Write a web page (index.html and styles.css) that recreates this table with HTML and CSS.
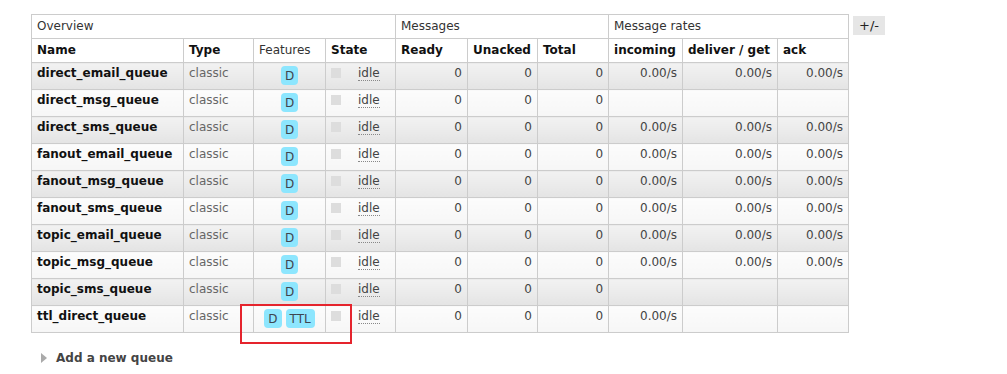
FILE: index.html
```html
<!DOCTYPE html>
<html>
<head>
<meta charset="utf-8">
<link rel="stylesheet" href="styles.css">
</head>
<body>
<div class="page">
  <table class="list">
    <colgroup>
      <col class="c-name"><col class="c-type"><col class="c-feat"><col class="c-state">
      <col class="c-ready"><col class="c-unacked"><col class="c-total">
      <col class="c-in"><col class="c-del"><col class="c-ack"><col class="c-pm">
    </colgroup>
    <thead>
      <tr class="group">
        <th colspan="4">Overview</th>
        <th colspan="3">Messages</th>
        <th colspan="3">Message rates</th>
        <th class="plus-minus"><span class="pm">+/-</span></th>
      </tr>
      <tr class="cols">
        <th>Name</th>
        <th>Type</th>
        <th class="light">Features</th>
        <th>State</th>
        <th>Ready</th>
        <th>Unacked</th>
        <th>Total</th>
        <th>incoming</th>
        <th>deliver / get</th>
        <th>ack</th>
        <th class="plus-minus"></th>
      </tr>
    </thead>
    <tbody>
      <tr class="alt1">
        <td class="name">direct_email_queue</td><td class="type">classic</td>
        <td class="feat"><span class="badge">D</span></td>
        <td class="state"><span class="sq"></span><abbr>idle</abbr></td>
        <td class="num">0</td><td class="num">0</td><td class="num">0</td>
        <td class="num">0.00/s</td><td class="num">0.00/s</td><td class="num">0.00/s</td>
        <td class="blank"></td>
      </tr>
      <tr class="alt2">
        <td class="name">direct_msg_queue</td><td class="type">classic</td>
        <td class="feat"><span class="badge">D</span></td>
        <td class="state"><span class="sq"></span><abbr>idle</abbr></td>
        <td class="num">0</td><td class="num">0</td><td class="num">0</td>
        <td class="num"></td><td class="num"></td><td class="num"></td>
        <td class="blank"></td>
      </tr>
      <tr class="alt1">
        <td class="name">direct_sms_queue</td><td class="type">classic</td>
        <td class="feat"><span class="badge">D</span></td>
        <td class="state"><span class="sq"></span><abbr>idle</abbr></td>
        <td class="num">0</td><td class="num">0</td><td class="num">0</td>
        <td class="num">0.00/s</td><td class="num">0.00/s</td><td class="num">0.00/s</td>
        <td class="blank"></td>
      </tr>
      <tr class="alt2">
        <td class="name">fanout_email_queue</td><td class="type">classic</td>
        <td class="feat"><span class="badge">D</span></td>
        <td class="state"><span class="sq"></span><abbr>idle</abbr></td>
        <td class="num">0</td><td class="num">0</td><td class="num">0</td>
        <td class="num">0.00/s</td><td class="num">0.00/s</td><td class="num">0.00/s</td>
        <td class="blank"></td>
      </tr>
      <tr class="alt1">
        <td class="name">fanout_msg_queue</td><td class="type">classic</td>
        <td class="feat"><span class="badge">D</span></td>
        <td class="state"><span class="sq"></span><abbr>idle</abbr></td>
        <td class="num">0</td><td class="num">0</td><td class="num">0</td>
        <td class="num">0.00/s</td><td class="num">0.00/s</td><td class="num">0.00/s</td>
        <td class="blank"></td>
      </tr>
      <tr class="alt2">
        <td class="name">fanout_sms_queue</td><td class="type">classic</td>
        <td class="feat"><span class="badge">D</span></td>
        <td class="state"><span class="sq"></span><abbr>idle</abbr></td>
        <td class="num">0</td><td class="num">0</td><td class="num">0</td>
        <td class="num">0.00/s</td><td class="num">0.00/s</td><td class="num">0.00/s</td>
        <td class="blank"></td>
      </tr>
      <tr class="alt1">
        <td class="name">topic_email_queue</td><td class="type">classic</td>
        <td class="feat"><span class="badge">D</span></td>
        <td class="state"><span class="sq"></span><abbr>idle</abbr></td>
        <td class="num">0</td><td class="num">0</td><td class="num">0</td>
        <td class="num">0.00/s</td><td class="num">0.00/s</td><td class="num">0.00/s</td>
        <td class="blank"></td>
      </tr>
      <tr class="alt2">
        <td class="name">topic_msg_queue</td><td class="type">classic</td>
        <td class="feat"><span class="badge">D</span></td>
        <td class="state"><span class="sq"></span><abbr>idle</abbr></td>
        <td class="num">0</td><td class="num">0</td><td class="num">0</td>
        <td class="num">0.00/s</td><td class="num">0.00/s</td><td class="num">0.00/s</td>
        <td class="blank"></td>
      </tr>
      <tr class="alt1">
        <td class="name">topic_sms_queue</td><td class="type">classic</td>
        <td class="feat"><span class="badge">D</span></td>
        <td class="state"><span class="sq"></span><abbr>idle</abbr></td>
        <td class="num">0</td><td class="num">0</td><td class="num">0</td>
        <td class="num"></td><td class="num"></td><td class="num"></td>
        <td class="blank"></td>
      </tr>
      <tr class="alt2">
        <td class="name">ttl_direct_queue</td><td class="type">classic</td>
        <td class="feat"><span class="badge">D</span><span class="badge">TTL</span><span class="highlight"></span></td>
        <td class="state"><span class="sq"></span><abbr>idle</abbr></td>
        <td class="num">0</td><td class="num">0</td><td class="num">0</td>
        <td class="num">0.00/s</td><td class="num"></td><td class="num"></td>
        <td class="blank"></td>
      </tr>
    </tbody>
  </table>
  <div class="add">
    <span class="tri"></span><span class="add-label">Add a new queue</span>
  </div>
</div>
</body>
</html>
```
FILE: styles.css
```css
html, body {
  margin: 0;
  padding: 0;
  background: #fff;
}
body {
  font-family: "DejaVu Sans", Verdana, sans-serif;
  font-size: 12px;
  color: #444;
}
.page {
  padding: 14px 0 0 31px;
}
table.list {
  border-collapse: collapse;
  table-layout: fixed;
  width: 857px;
}
col.c-name { width: 152px; }
col.c-type { width: 70px; }
col.c-feat { width: 72px; }
col.c-state { width: 70px; }
col.c-ready { width: 72px; }
col.c-unacked { width: 70px; }
col.c-total { width: 71px; }
col.c-in { width: 74px; }
col.c-del { width: 95px; }
col.c-ack { width: 71px; }
col.c-pm { width: 40px; }
table.list th,
table.list td {
  border: 1px solid #ccc;
  text-align: left;
  vertical-align: top;
  padding: 0 5px;
  overflow: visible;
  white-space: nowrap;
}
tr.group th {
  font-weight: normal;
  color: #333;
  height: 23px;
  line-height: 23px;
  background: #fff;
}
tr.cols th {
  font-weight: bold;
  color: #111;
  height: 23px;
  line-height: 23px;
  background: #fff;
}
tr.cols th.light {
  font-weight: normal;
  color: #333;
}
table.list th.plus-minus,
table.list td.blank {
  border: none;
  border-left: 1px solid #ccc;
  padding: 0 0 0 4px;
  background: #fff;
}
.pm {
  display: inline-block;
  background: #e6e6e6;
  color: #222;
  padding: 0 6px;
  height: 19px;
  line-height: 19px;
  margin-top: 1px;
  font-size: 13px;
}
tbody td {
  height: 26px;
  line-height: 20px;
}
tr.alt1 td {
  background: linear-gradient(to bottom, #f2f2f2 0%, #e4e4e4 100%);
}
tr.alt2 td {
  background: linear-gradient(to bottom, #fcfcfc 0%, #f6f6f6 100%);
}
td.name {
  font-weight: bold;
  color: #111;
}
td.type {
  color: #666;
}
td.num {
  text-align: right !important;
  color: #444;
}
td.feat {
  text-align: center !important;
  position: relative;
  padding-top: 3px !important;
  height: 23px !important;
}
.badge {
  display: inline-block;
  background: #8de6fe;
  color: #3f4550;
  border-radius: 4px;
  padding: 0 4px;
  min-width: 9px;
  height: 19px;
  line-height: 20px;
  margin: 0 2px;
  text-align: center;
}
td.state {
  color: #444;
}
.sq {
  display: inline-block;
  width: 10px;
  height: 10px;
  background: #ddd;
  vertical-align: -1px;
  margin-right: 17px;
}
abbr {
  text-decoration: none;
  border-bottom: 1px dotted #888;
}
.highlight {
  position: absolute;
  left: -14px;
  top: -2px;
  width: 108px;
  height: 36px;
  border: 2px solid #e5242d;
  pointer-events: none;
}
.add {
  display: flex;
  align-items: center;
  margin-top: 18px;
  padding-left: 10px;
}
.tri {
  width: 0;
  height: 0;
  border-top: 5px solid transparent;
  border-bottom: 5px solid transparent;
  border-left: 6px solid #aaa;
  margin-right: 9px;
}
.add-label {
  font-weight: bold;
  font-size: 12px;
  color: #444;
}
```
